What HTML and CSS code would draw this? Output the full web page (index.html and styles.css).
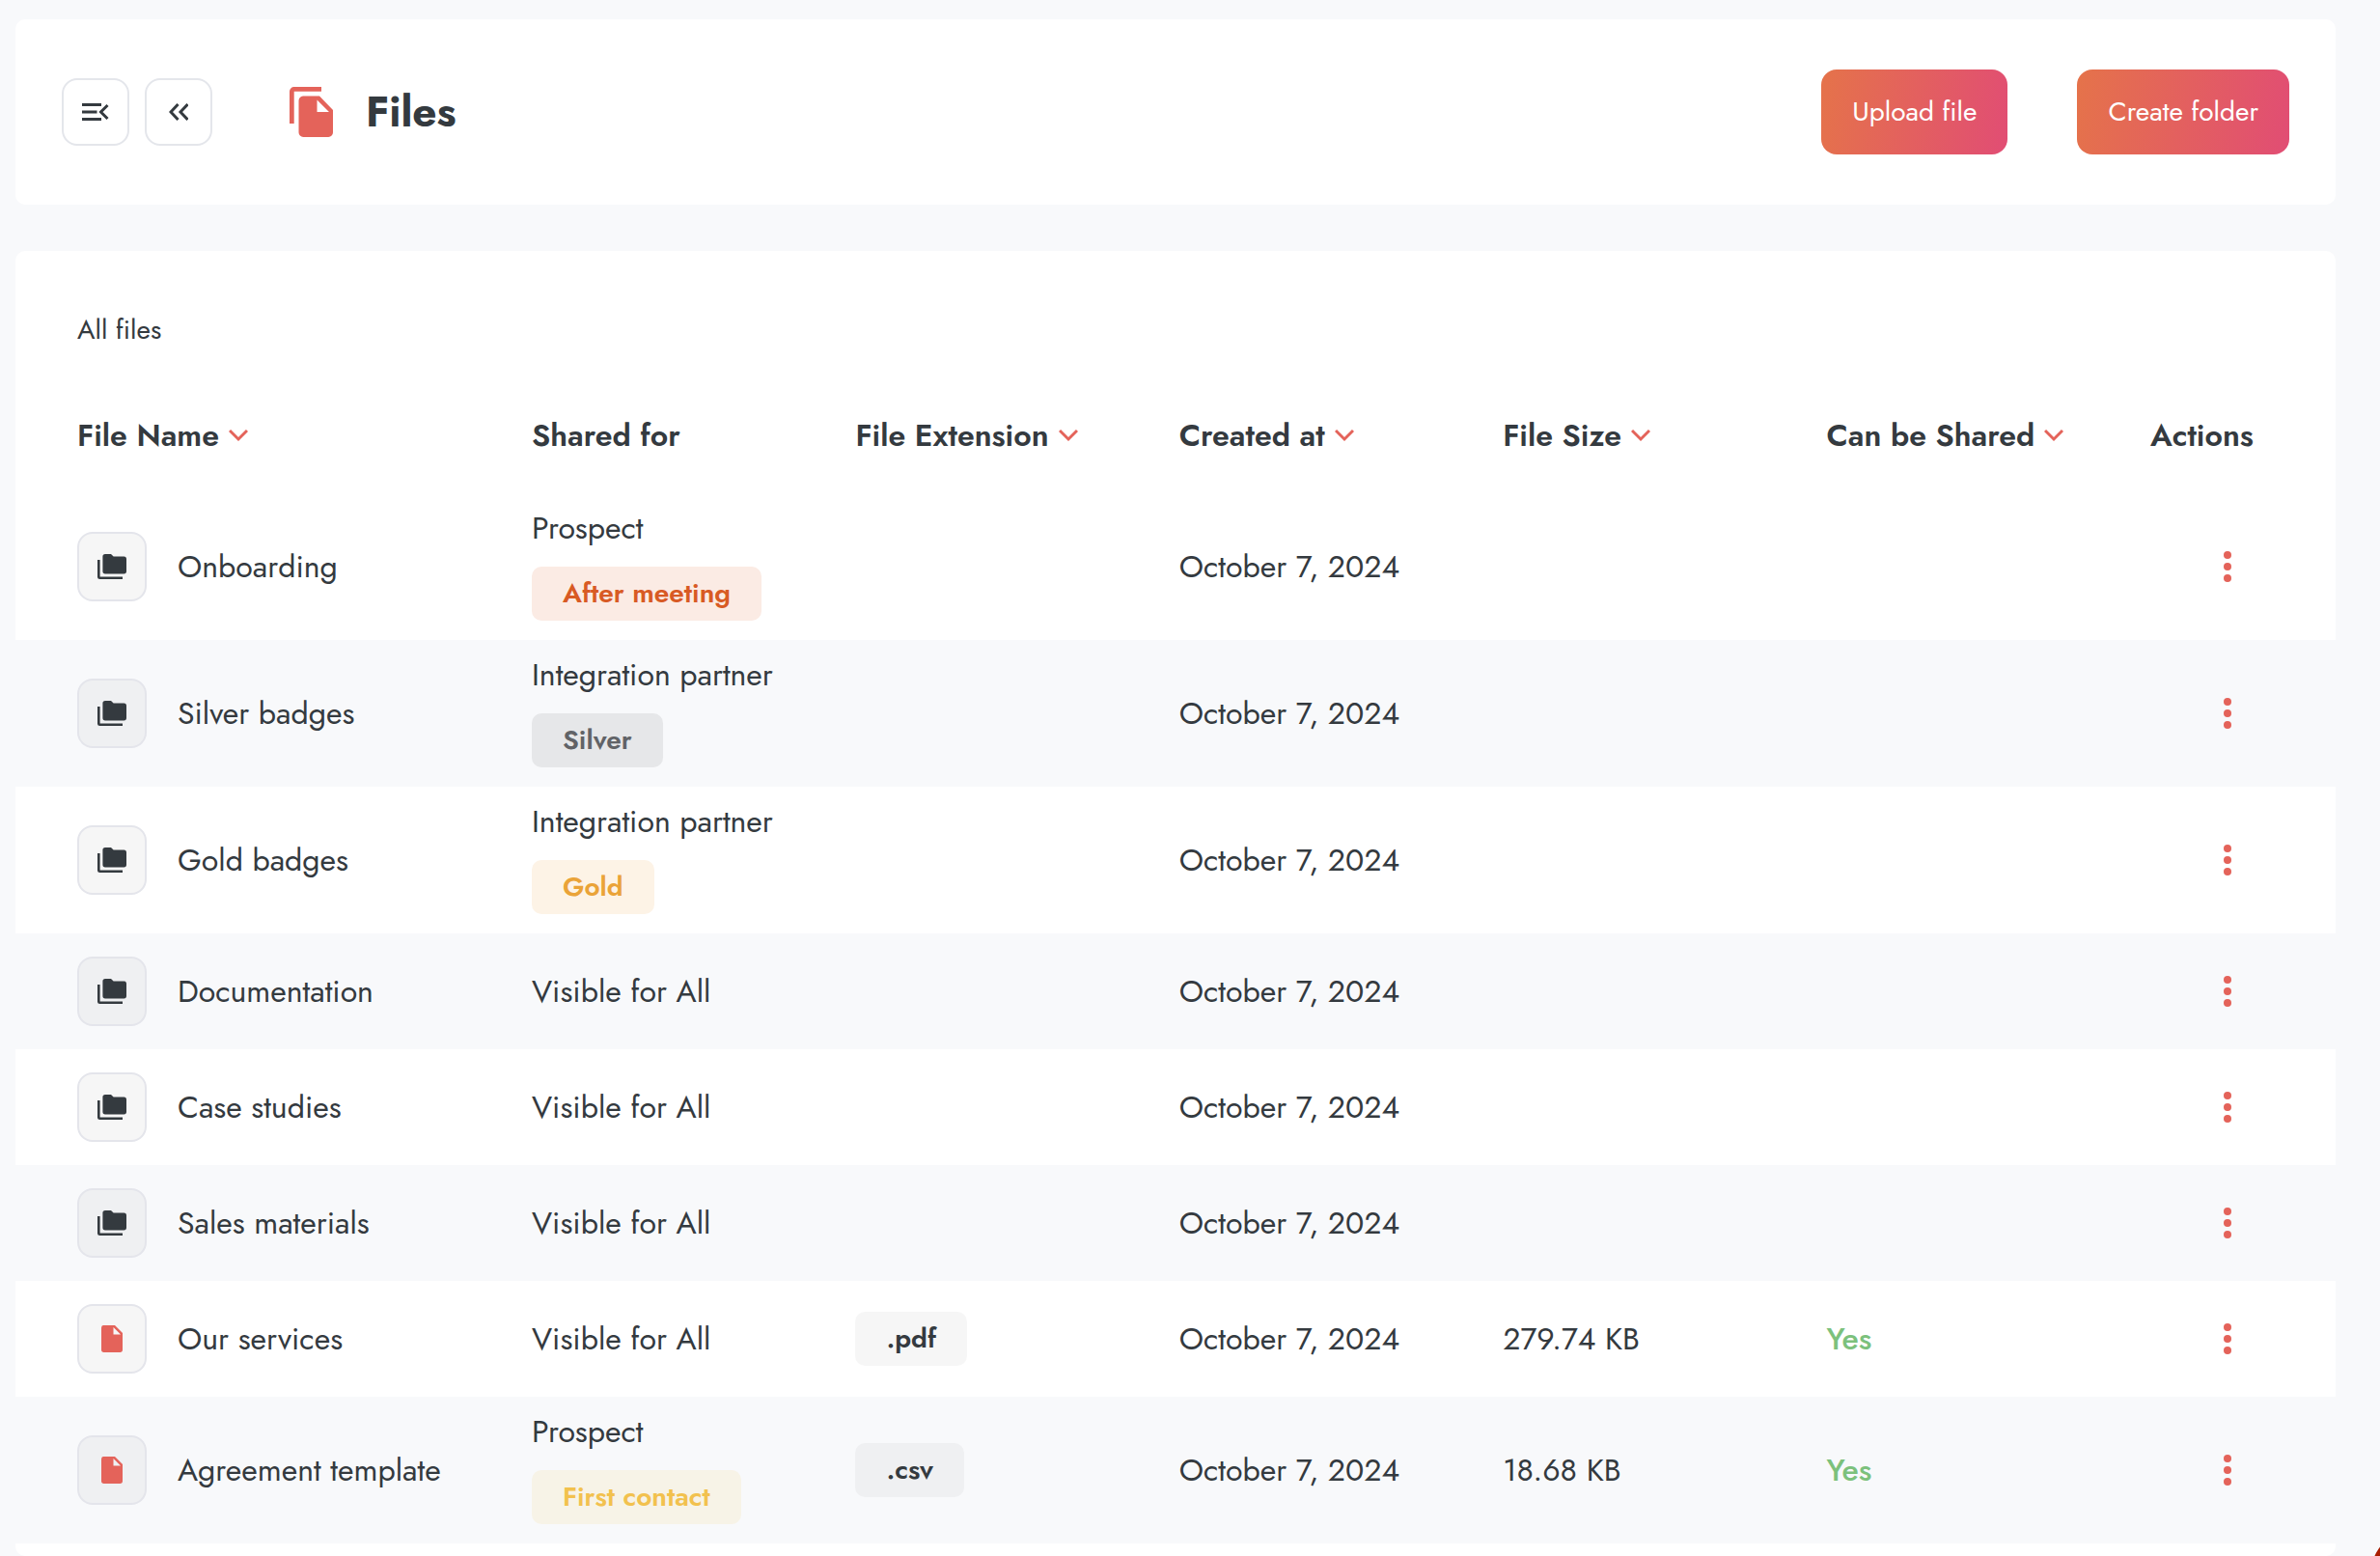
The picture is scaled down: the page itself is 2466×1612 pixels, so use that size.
FILE: index.html
```html
<!DOCTYPE html>
<html lang="en">
<head>
<meta charset="utf-8">
<title>Files</title>
<link rel="stylesheet" href="styles.css">
</head>
<body>
<svg class="sprite" aria-hidden="true">
  <symbol id="chevron" viewBox="0 0 20 14"><path d="M1 2l9 9 9-9" fill="none" stroke="currentColor" stroke-width="3"/></symbol>
  <symbol id="folders" viewBox="0 0 30 26"><path d="M0 6v17.500A2.400 2.400 0 0 0 2.400 26H26v-2.600H2.600V6z"/><path d="M8 0h6l2.600 2.600h10.800A2.600 2.600 0 0 1 30 5.200v12.600a2.600 2.600 0 0 1-2.600 2.600H8a2.600 2.600 0 0 1-2.600-2.600V2.600A2.600 2.600 0 0 1 8 0z"/></symbol>
  <symbol id="file" viewBox="0 0 22 28"><path fill-rule="evenodd" d="M3 0h11l8 8v17.300A2.700 2.700 0 0 1 19.300 28H2.700A2.700 2.700 0 0 1 0 25.300V2.700A2.700 2.700 0 0 1 3 0zM12.500 2v7.500H20z"/></symbol>
  <symbol id="dots" viewBox="0 0 8 32"><circle cx="4" cy="4" r="4"/><circle cx="4" cy="16" r="4"/><circle cx="4" cy="28" r="4"/></symbol>
</svg>
<main class="page">
  <header class="card topbar">
    <div class="nav-buttons">
      <button class="icon-button" type="button" aria-label="Collapse menu"><svg class="line-icon" width="28" height="18" viewBox="0 0 28 18"><path d="M0 1.500h20M0 9h15.500M0 16.500h20M26.500 2l-7 7 7 7"/></svg></button>
      <button class="icon-button" type="button" aria-label="Back"><svg class="line-icon" width="20" height="18" viewBox="0 0 20 18"><path d="M9.500 1L2 9l7.500 8M19.500 1L12 9l7.500 8"/></svg></button>
    </div>
    <svg class="title-icon" viewBox="0 0 45 52" aria-hidden="true"><path d="M33 0H4.700A4.700 4.700 0 0 0 0 4.700V38h4.700V4.700H33z"/><path fill-rule="evenodd" d="M14 9.500h17L45 24v23.300a4.700 4.700 0 0 1-4.700 4.700H14.200a4.700 4.700 0 0 1-4.700-4.700V14.200A4.700 4.700 0 0 1 14 9.500zM28.500 13.500V26H41z"/></svg>
    <h1>Files</h1>
    <div class="actions">
      <button class="primary" type="button">Upload file</button>
      <button class="primary" type="button">Create folder</button>
    </div>
  </header>

  <section class="card listing">
    <h2>All files</h2>
    <table>
      <thead>
        <tr>
          <th class="col-name" scope="col"><button class="sort" type="button">File Name<svg><use href="#chevron"/></svg></button></th>
          <th scope="col">Shared for</th>
          <th scope="col"><button class="sort" type="button">File Extension<svg><use href="#chevron"/></svg></button></th>
          <th scope="col"><button class="sort" type="button">Created at<svg><use href="#chevron"/></svg></button></th>
          <th scope="col"><button class="sort" type="button">File Size<svg><use href="#chevron"/></svg></button></th>
          <th scope="col"><button class="sort" type="button">Can be Shared<svg><use href="#chevron"/></svg></button></th>
          <th class="col-actions" scope="col">Actions</th>
        </tr>
      </thead>
      <tbody>
        <tr>
          <td><div class="name"><span class="tile"><svg class="folders"><use href="#folders"/></svg></span>Onboarding</div></td>
          <td><div class="shared">Prospect<span class="badge orange">After meeting</span></div></td>
          <td></td><td>October 7, 2024</td><td></td><td></td>
          <td><button class="more" type="button" aria-label="Actions for Onboarding"><svg><use href="#dots"/></svg></button></td>
        </tr>
        <tr>
          <td><div class="name"><span class="tile"><svg class="folders"><use href="#folders"/></svg></span>Silver badges</div></td>
          <td><div class="shared">Integration partner<span class="badge silver">Silver</span></div></td>
          <td></td><td>October 7, 2024</td><td></td><td></td>
          <td><button class="more" type="button" aria-label="Actions for Silver badges"><svg><use href="#dots"/></svg></button></td>
        </tr>
        <tr>
          <td><div class="name"><span class="tile"><svg class="folders"><use href="#folders"/></svg></span>Gold badges</div></td>
          <td><div class="shared">Integration partner<span class="badge gold">Gold</span></div></td>
          <td></td><td>October 7, 2024</td><td></td><td></td>
          <td><button class="more" type="button" aria-label="Actions for Gold badges"><svg><use href="#dots"/></svg></button></td>
        </tr>
        <tr>
          <td><div class="name"><span class="tile"><svg class="folders"><use href="#folders"/></svg></span>Documentation</div></td>
          <td>Visible for All</td>
          <td></td><td>October 7, 2024</td><td></td><td></td>
          <td><button class="more" type="button" aria-label="Actions for Documentation"><svg><use href="#dots"/></svg></button></td>
        </tr>
        <tr>
          <td><div class="name"><span class="tile"><svg class="folders"><use href="#folders"/></svg></span>Case studies</div></td>
          <td>Visible for All</td>
          <td></td><td>October 7, 2024</td><td></td><td></td>
          <td><button class="more" type="button" aria-label="Actions for Case studies"><svg><use href="#dots"/></svg></button></td>
        </tr>
        <tr>
          <td><div class="name"><span class="tile"><svg class="folders"><use href="#folders"/></svg></span>Sales materials</div></td>
          <td>Visible for All</td>
          <td></td><td>October 7, 2024</td><td></td><td></td>
          <td><button class="more" type="button" aria-label="Actions for Sales materials"><svg><use href="#dots"/></svg></button></td>
        </tr>
        <tr>
          <td><div class="name"><span class="tile"><svg class="file"><use href="#file"/></svg></span>Our services</div></td>
          <td>Visible for All</td>
          <td><span class="badge ext">.pdf</span></td><td>October 7, 2024</td><td>279.74 KB</td><td class="yes">Yes</td>
          <td><button class="more" type="button" aria-label="Actions for Our services"><svg><use href="#dots"/></svg></button></td>
        </tr>
        <tr>
          <td><div class="name"><span class="tile"><svg class="file"><use href="#file"/></svg></span>Agreement template</div></td>
          <td><div class="shared">Prospect<span class="badge yellow">First contact</span></div></td>
          <td><span class="badge ext">.csv</span></td><td>October 7, 2024</td><td>18.68 KB</td><td class="yes">Yes</td>
          <td><button class="more" type="button" aria-label="Actions for Agreement template"><svg><use href="#dots"/></svg></button></td>
        </tr>
      </tbody>
    </table>
  </section>
</main>
<button class="help" type="button" aria-label="Help"></button>
</body>
</html>
```
FILE: styles.css
```css
* { box-sizing: border-box; }

html { height: 100%; overflow: hidden; }

body {
  margin: 0;
  height: 100%;
  overflow: hidden;
  background: #f8f9fb;
  color: #343a3f;
  font: 400 32px/48px Jost, Lato, sans-serif;
}

button {
  font: inherit;
  color: inherit;
  background: none;
  border: 0;
  padding: 0;
}

svg { display: block; fill: currentColor; }

.sprite { display: none; }

.line-icon { fill: none; stroke: currentColor; stroke-width: 3; }

.page {
  display: flex;
  flex-direction: column;
  gap: 48px;
  min-height: 100%;
  padding: 20px 46px 0 16px;
}

.card { background: #fff; border-radius: 10px; }

.topbar { display: flex; align-items: center; padding: 52px 48px; }

.nav-buttons { display: flex; gap: 16px; margin-right: 80px; }

.icon-button {
  display: grid;
  place-items: center;
  width: 70px;
  height: 70px;
  border: 2px solid #e4e6eb;
  border-radius: 16px;
}

.title-icon { width: 45px; height: 52px; margin-right: 34px; color: #e4635a; }

h1 { margin: 0; font-size: 44px; font-weight: 700; }

.actions { display: flex; gap: 72px; margin-left: auto; }

.primary {
  height: 88px;
  padding: 0 32px;
  border-radius: 16px;
  background: linear-gradient(100deg, #e5734a, #e14d74);
  color: #fff;
  font-size: 28px;
}

.listing { flex: 1 0 auto; padding-top: 58px; }

h2 { margin: 0; padding-left: 64px; font-size: 28px; font-weight: 400; }

table { width: 100%; margin-top: 30px; border-collapse: collapse; table-layout: fixed; }

th { height: 115px; padding: 0 0 6px; text-align: left; font-weight: 600; white-space: nowrap; }

td { height: 120px; padding: 0; white-space: nowrap; }

th:first-child, td:first-child { padding-left: 64px; }

.col-name { width: 535px; }

.col-actions { width: 192px; }

tbody tr:nth-child(even) { background: #f8f9fb; }

.sort { display: flex; align-items: center; gap: 10px; }

.sort svg { width: 20px; height: 14px; color: #e4635a; }

.name { display: flex; align-items: center; gap: 32px; }

.tile {
  display: grid;
  place-items: center;
  width: 72px;
  height: 72px;
  border: 2px solid #e4e5eb;
  border-radius: 16px;
  background: rgba(0, 0, 0, 0.035);
}

.folders { width: 30px; height: 26px; }

.file { width: 22px; height: 28px; color: #e4635a; }

.shared { display: flex; flex-direction: column; align-items: flex-start; gap: 16px; padding: 12px 0 20px; }

.badge {
  display: inline-block;
  padding: 0 32px;
  border-radius: 10px;
  font-size: 28px;
  font-weight: 600;
  line-height: 56px;
}

.orange { background: #fbebe4; color: #d85a24; }
.silver { background: #e6e7e9; color: #616367; }
.gold { background: #fdf3e6; color: #eaa338; }
.yellow { background: #f7f3e7; color: #f2c14e; }
.ext { background: rgba(0, 0, 0, 0.035); }

.yes { color: #7cc17c; font-weight: 500; }

.more { display: grid; place-items: center; width: 48px; height: 48px; margin-left: 56px; color: #e4635a; }

.more svg { width: 8px; height: 32px; }

.help {
  position: fixed;
  right: -86px;
  bottom: -68px;
  width: 96px;
  height: 96px;
  border-radius: 50%;
  background: #a81c00;
}
```
